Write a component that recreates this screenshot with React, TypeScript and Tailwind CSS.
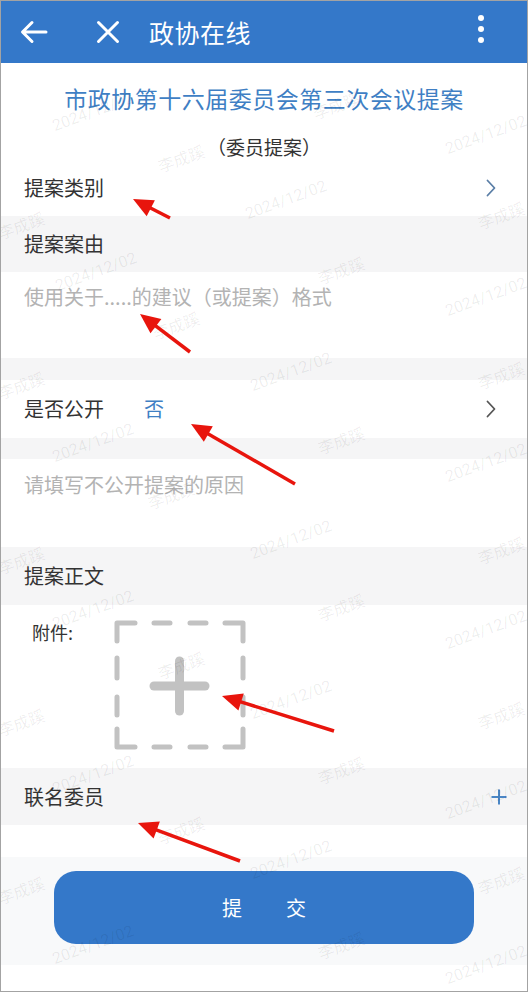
const font = { fontFamily: '"Noto Sans CJK SC", "Noto Sans", sans-serif' }

const dates: [number, number][] = [
    [92, 112], [485, 135], [285, 200], [95, 272], [485, 297], [290, 372], [92, 443],
    [485, 463], [290, 540], [92, 610], [485, 630], [290, 700], [92, 775], [485, 800],
    [290, 860], [92, 945], [485, 965],
]
const names: [number, number][] = [
    [180, 158], [335, 105], [20, 225], [20, 385], [20, 560], [20, 722], [20, 890],
    [175, 325], [170, 495], [180, 665], [180, 830], [340, 270], [340, 440], [340, 607],
    [340, 770], [340, 945], [500, 215], [500, 375], [500, 550], [500, 715], [500, 880],
]

// tail -> head
const arrows: [number, number, number, number][] = [
    [169, 217, 132, 198],
    [189, 351, 139, 313],
    [294, 483, 190, 423],
    [333, 730, 221, 695],
    [239, 860, 137, 822],
]

function Arrow({ t }: { t: [number, number, number, number] }) {
    const [x1, y1, x2, y2] = t
    const dx = x2 - x1
    const dy = y2 - y1
    const len = Math.hypot(dx, dy)
    const ux = dx / len
    const uy = dy / len
    const hl = 20
    const hw = 9
    const bx = x2 - ux * hl
    const by = y2 - uy * hl
    const pts = `${x2},${y2} ${bx - uy * hw},${by + ux * hw} ${bx + uy * hw},${by - ux * hw}`
    return (
        <g>
            <line x1={x1} y1={y1} x2={bx + ux * 2} y2={by + uy * 2} stroke="#e8150d" strokeWidth={3.5} />
            <polygon points={pts} fill="#e8150d" />
        </g>
    )
}

function Chevron({ color }: { color: string }) {
    return (
        <svg width="12" height="18" viewBox="0 0 12 18" fill="none">
            <path d="M2.5 1.5 L9.5 9 L2.5 16.5" stroke={color} strokeWidth="1.8" strokeLinecap="round" strokeLinejoin="round" />
        </svg>
    )
}

function UploadBox() {
    const c = '#c2c2c2'
    return (
        <svg width="132" height="130" viewBox="0 0 132 130" fill="none">
            <g stroke={c} strokeWidth="5" strokeLinecap="round" strokeLinejoin="round">
                <path d="M3 21 V3 H21" />
                <path d="M111 3 H129 V21" />
                <path d="M3 109 V127 H21" />
                <path d="M111 127 H129 V109" />
                <path d="M40 3 H56 M76 3 H92" />
                <path d="M40 127 H56 M76 127 H92" />
                <path d="M3 38 V58 M3 77 V95" />
                <path d="M129 38 V58 M129 77 V95" />
            </g>
            <g stroke={c} strokeWidth="9" strokeLinecap="round">
                <path d="M40 66 H91" />
                <path d="M65.5 41 V91" />
            </g>
        </svg>
    )
}

export default function App() {
    return (
        <div className="w-[528px] h-[992px] border border-[#a3a3a3] bg-white overflow-hidden relative text-[#333]" style={font}>
            <div className="h-[62px] bg-[#3478c9] flex items-center text-white">
                <svg className="ml-[19px]" width="28" height="24" viewBox="0 0 28 24" fill="none">
                    <path d="M26 12 H3 M12 2.5 L2.5 12 L12 21.5" stroke="white" strokeWidth="3" strokeLinecap="round" strokeLinejoin="round" />
                </svg>
                <svg className="ml-[48px]" width="24" height="24" viewBox="0 0 24 24" fill="none">
                    <path d="M2.5 2.5 L21.5 21.5 M21.5 2.5 L2.5 21.5" stroke="white" strokeWidth="3" strokeLinecap="round" />
                </svg>
                <div className="ml-[29px] text-[25px] leading-none tracking-[0.5px]">政协在线</div>
                <div className="ml-auto mr-[43px] flex flex-col gap-[5px] mt-[-6px]">
                    <span className="w-[6px] h-[6px] rounded-full bg-white" />
                    <span className="w-[6px] h-[6px] rounded-full bg-white" />
                    <span className="w-[6px] h-[6px] rounded-full bg-white" />
                </div>
            </div>

            <div className="relative">
                <div className="h-[97px] flex flex-col items-center pt-[24px] gap-[27px]">
                    <div className="text-[23px] leading-none text-[#3f7fc4] tracking-[0.5px]">市政协第十六届委员会第三次会议提案</div>
                    <div className="text-[19px] leading-none text-[#333]">（委员提案）</div>
                </div>

                <div className="h-[56px] flex items-center pl-[23px] pr-[30px]">
                    <span className="text-[20px] leading-none">提案类别</span>
                    <span className="ml-auto"><Chevron color="#5a7ea6" /></span>
                </div>

                <div className="h-[56px] flex items-center pl-[23px] bg-[#f5f5f6]">
                    <span className="text-[20px] leading-none">提案案由</span>
                </div>

                <div className="h-[86px] pl-[23px] pt-[14px]">
                    <span className="text-[20px] leading-none text-[#b3b3b3]">使用关于.....的建议（或提案）格式</span>
                </div>

                <div className="h-[22px] bg-[#f5f5f6]" />

                <div className="h-[58px] flex items-center pl-[23px] pr-[30px]">
                    <span className="text-[20px] leading-none">是否公开</span>
                    <span className="text-[20px] leading-none text-[#3f7fc4] ml-[40px]">否</span>
                    <span className="ml-auto"><Chevron color="#555" /></span>
                </div>

                <div className="h-[21px] bg-[#f5f5f6]" />

                <div className="h-[88px] pl-[23px] pt-[15px]">
                    <span className="text-[20px] leading-none text-[#b3b3b3]">请填写不公开提案的原因</span>
                </div>

                <div className="h-[58px] flex items-center pl-[23px] bg-[#f5f5f6]">
                    <span className="text-[20px] leading-none">提案正文</span>
                </div>

                <div className="h-[163px] flex items-start pl-[31px] pt-[15px]">
                    <span className="text-[18px] leading-none mt-[3px]">附件:</span>
                    <div className="ml-[41px]"><UploadBox /></div>
                </div>

                <div className="h-[57px] flex items-center pl-[23px] pr-[20px] bg-[#f5f5f6]">
                    <span className="text-[20px] leading-none">联名委员</span>
                    <svg className="ml-auto" width="16" height="16" viewBox="0 0 16 16" fill="none">
                        <path d="M8 0.5 V15.5 M0.5 8 H15.5" stroke="#4a86c5" strokeWidth="2" />
                    </svg>
                </div>

                <div className="h-[32px]" />

                <div className="h-[108px] bg-[#f8f9fa] pt-[14px] px-[53px]">
                    <div className="h-[73px] rounded-[22px] bg-[#3478c9] flex items-center justify-center gap-[44px] text-white text-[20px] leading-none">
                        <span>提</span>
                        <span>交</span>
                    </div>
                </div>

                <div className="absolute inset-0 pointer-events-none text-[16px] leading-none text-black/[0.07]">
                    {dates.map(([x, y], i) => (
                        <span
                            key={'d' + i}
                            className="absolute -translate-x-1/2 -translate-y-1/2 -rotate-[20deg] whitespace-nowrap"
                            style={{ left: x, top: y - 63, fontFamily: 'Roboto, sans-serif' }}
                        >
                            2024/12/02
                        </span>
                    ))}
                    {names.map(([x, y], i) => (
                        <span
                            key={'n' + i}
                            className="absolute -translate-x-1/2 -translate-y-1/2 -rotate-[20deg] whitespace-nowrap"
                            style={{ left: x, top: y - 63 }}
                        >
                            李成蹊
                        </span>
                    ))}
                </div>
            </div>

            <svg className="absolute left-0 top-0 pointer-events-none" width="528" height="992">
                {arrows.map((a, i) => (
                    <Arrow key={i} t={a} />
                ))}
            </svg>
        </div>
    )
}
